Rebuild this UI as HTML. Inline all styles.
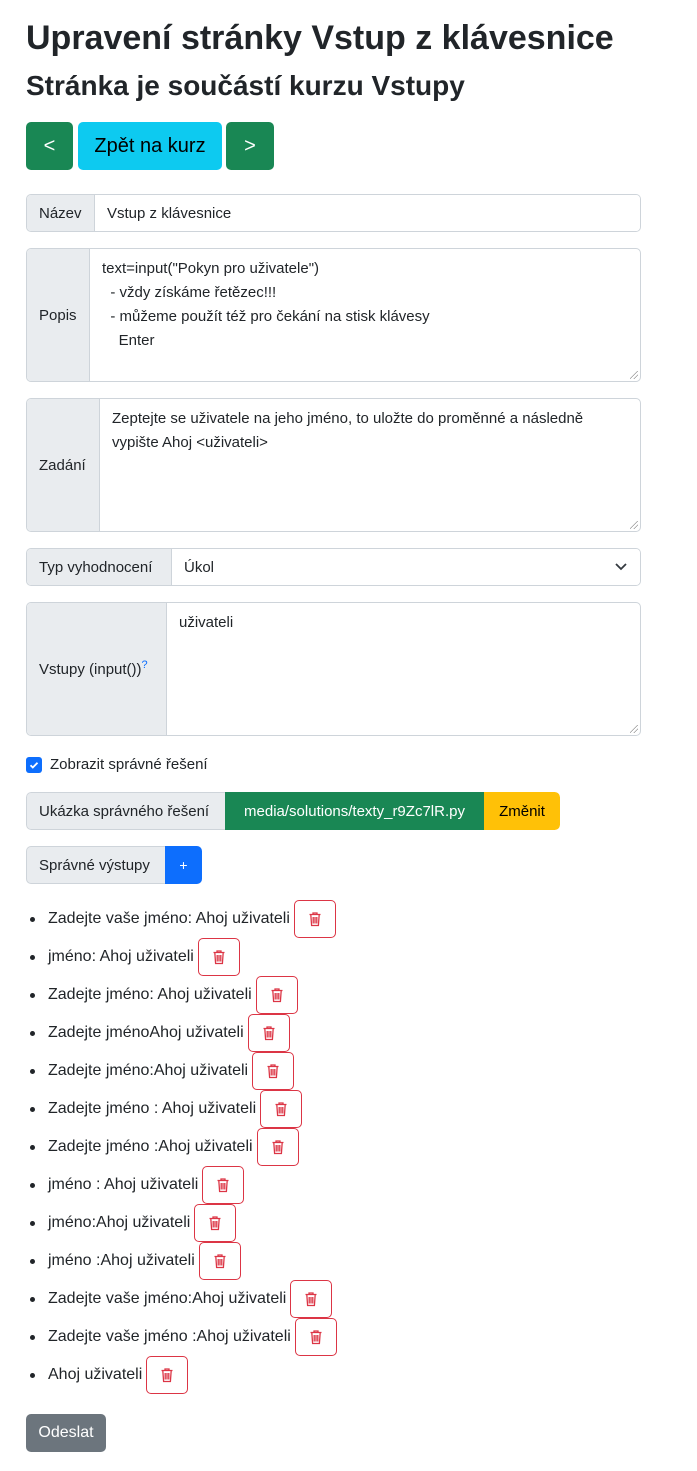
<!DOCTYPE html>
<html><head><meta charset="utf-8">
<style>
*{box-sizing:border-box;margin:0;padding:0}
body{width:697px;height:1471px;background:#fff;font-family:"Liberation Sans",sans-serif;color:#212529;font-size:16px;position:relative;overflow:hidden}
.a{position:absolute;left:26px}
h1{font-size:34px;font-weight:bold;top:15px;line-height:46px;white-space:nowrap}
h2{font-size:28px;font-weight:bold;top:68px;line-height:36px;white-space:nowrap}
.btn{position:absolute;top:122px;height:48px;border-radius:5px;font-size:20px;display:flex;align-items:center;justify-content:center}
.grp{display:flex;width:615px;border:1px solid #ced4da;border-radius:5px;overflow:hidden}
.lab{background:#e9ecef;border-right:1px solid #ced4da;display:flex;align-items:center;padding:0 12px;white-space:nowrap;color:#212529;font-size:15px}
.val{flex:1;background:#fff;padding:0 12px;display:flex;align-items:center;font-size:15px}
.ta{flex:1;padding:8px 12px;line-height:24px;position:relative;font-size:15px}
.ta:after{content:"";position:absolute;right:2px;bottom:2px;width:8px;height:8px;background:linear-gradient(135deg,transparent 45%,#999 45%,#999 52%,transparent 52%,transparent 70%,#999 70%,#999 77%,transparent 77%)}
ul{list-style:none}
li{height:38px;display:flex;align-items:center;position:relative;padding-left:22px;white-space:nowrap}
li:before{content:"";position:absolute;left:4px;top:17px;width:5px;height:5px;border-radius:50%;background:#212529}
.del{width:42px;height:38px;border:1px solid #dc3545;border-radius:5px;margin-left:4px;display:flex;align-items:center;justify-content:center}
</style></head><body>
<h1 class="a">Upravení stránky Vstup z klávesnice</h1>
<h2 class="a">Stránka je součástí kurzu Vstupy</h2>
<div class="btn" style="left:26px;width:47px;background:#198754;color:#fff">&lt;</div>
<div class="btn" style="left:78px;width:144px;background:#0dcaf0;color:#000">Zpět na kurz</div>
<div class="btn" style="left:226px;width:48px;background:#198754;color:#fff">&gt;</div>

<div class="a grp" style="top:194px;height:38px"><div class="lab" style="width:68px">Název</div><div class="val">Vstup z klávesnice</div></div>
<div class="a grp" style="top:248px;height:134px"><div class="lab" style="width:63px">Popis</div><div class="ta">text=input("Pokyn pro uživatele")<br>&nbsp;&nbsp;- vždy získáme řetězec!!!<br>&nbsp;&nbsp;- můžeme použít též pro čekání na stisk klávesy<br>&nbsp;&nbsp;&nbsp;&nbsp;Enter</div></div>
<div class="a grp" style="top:398px;height:134px"><div class="lab" style="width:73px">Zadání</div><div class="ta">Zeptejte se uživatele na jeho jméno, to uložte do proměnné a následně vypište Ahoj &lt;uživateli&gt;</div></div>
<div class="a grp" style="top:548px;height:38px"><div class="lab" style="width:145px">Typ vyhodnocení</div><div class="val" style="justify-content:space-between">Úkol<svg width="14" height="10" viewBox="0 0 14 10"><path d="M2 2l5 5 5-5" fill="none" stroke="#343a40" stroke-width="1.8"/></svg></div></div>
<div class="a grp" style="top:602px;height:134px"><div class="lab" style="width:140px">Vstupy (input())<sup style="color:#0d6efd;font-size:11px;position:relative;top:-4px">?</sup></div><div class="ta">uživateli</div></div>

<div class="a" style="top:756px;display:flex;align-items:center;gap:8px;font-size:15px"><span style="width:16px;height:16px;border-radius:3px;background:#0d6efd;display:inline-flex;align-items:center;justify-content:center"><svg width="12" height="12" viewBox="0 0 12 12"><path d="M2.5 6.2l2.3 2.3 4.7-4.8" fill="none" stroke="#fff" stroke-width="1.8"/></svg></span>Zobrazit správné řešení</div>

<div class="a" style="top:792px;height:38px;display:flex;border-radius:5px;overflow:hidden;font-size:15px">
<div class="lab" style="border:1px solid #ced4da;border-right:none;border-radius:5px 0 0 5px;width:199px">Ukázka správného řešení</div>
<div style="background:#198754;color:#fff;width:259px;display:flex;align-items:center;justify-content:center">media/solutions/texty_r9Zc7lR.py</div>
<div style="background:#ffc107;color:#000;width:76px;display:flex;align-items:center;justify-content:center;border-radius:0 5px 5px 0">Změnit</div></div>

<div class="a" style="top:846px;height:38px;display:flex;font-size:15px">
<div class="lab" style="border:1px solid #ced4da;border-right:none;border-radius:5px 0 0 5px;width:139px">Správné výstupy</div>
<div style="background:#0d6efd;color:#fff;width:37px;display:flex;align-items:center;justify-content:center;border-radius:0 5px 5px 0;font-size:14px">+</div></div>

<ul class="a" style="top:900px">
<li>Zadejte vaše jméno: Ahoj uživateli<span class="del"></span></li>
<li>jméno: Ahoj uživateli<span class="del"></span></li>
<li>Zadejte jméno: Ahoj uživateli<span class="del"></span></li>
<li>Zadejte jménoAhoj uživateli<span class="del"></span></li>
<li>Zadejte jméno:Ahoj uživateli<span class="del"></span></li>
<li>Zadejte jméno : Ahoj uživateli<span class="del"></span></li>
<li>Zadejte jméno :Ahoj uživateli<span class="del"></span></li>
<li>jméno : Ahoj uživateli<span class="del"></span></li>
<li>jméno:Ahoj uživateli<span class="del"></span></li>
<li>jméno :Ahoj uživateli<span class="del"></span></li>
<li>Zadejte vaše jméno:Ahoj uživateli<span class="del"></span></li>
<li>Zadejte vaše jméno :Ahoj uživateli<span class="del"></span></li>
<li>Ahoj uživateli<span class="del"></span></li>
</ul>

<div class="a" style="top:1414px;width:80px;height:38px;background:#6c757d;color:#fff;border-radius:5px;display:flex;align-items:center;justify-content:center">Odeslat</div>

<script>
document.querySelectorAll('.del').forEach(function(e){e.innerHTML='<svg width="16" height="16" viewBox="0 0 16 16"><path d="M2.5 3.5h11M6 3.5V2h4v1.5M3.8 3.5l.8 11h6.8l.8-11M6.2 6v6.5M8 6v6.5M9.8 6v6.5" fill="none" stroke="#dc3545" stroke-width="1.3"/></svg>';});
</script>
</body></html>
